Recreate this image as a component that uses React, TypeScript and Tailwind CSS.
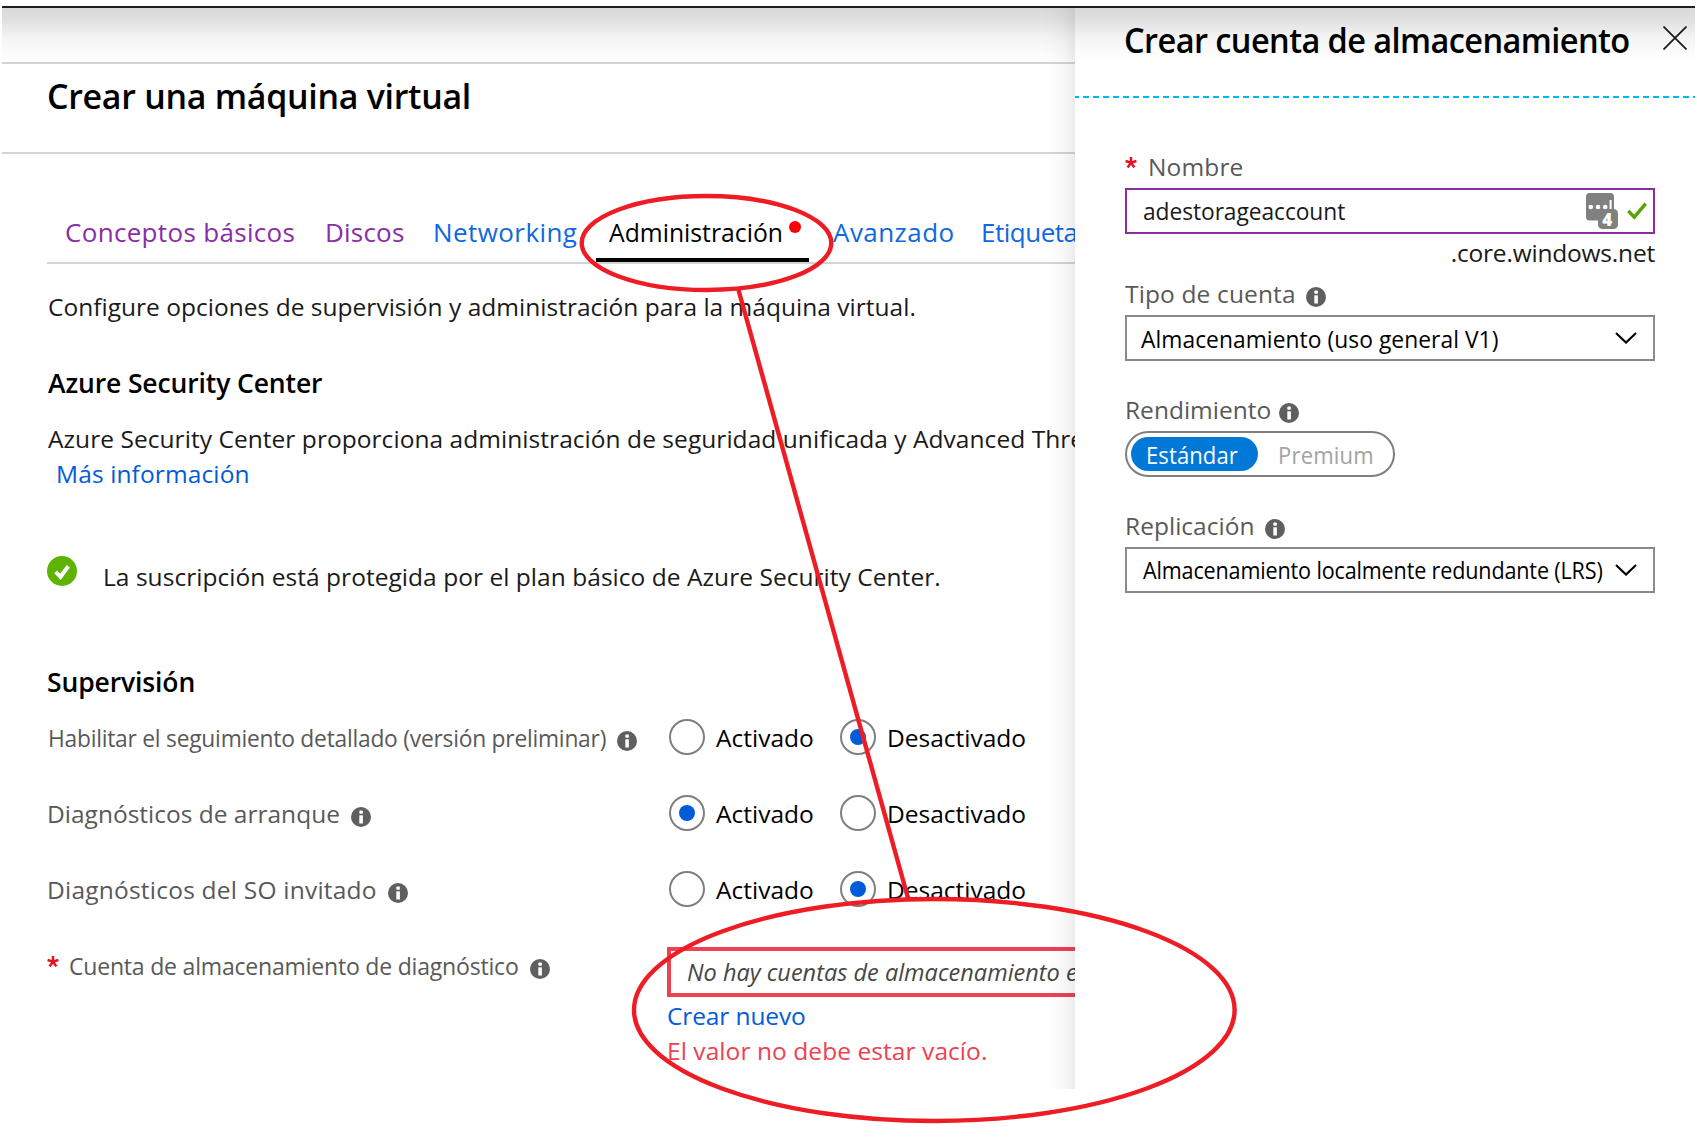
import React from "react";

function Info({ className = "" }: { className?: string }) {
  return (
    <svg viewBox="0 0 20 20" className={`size-5 shrink-0 ${className}`}>
      <circle cx="10" cy="10" r="10" fill="#5f5f5f" />
      <rect x="8.3" y="3.6" width="3.6" height="3.2" rx="0.8" fill="#fff" />
      <path d="M8.3 8.3h3.6v8.2H8.3z" fill="#fff" />
    </svg>
  );
}

function Asterisk() {
  return (
    <svg viewBox="0 0 12 11" className="h-[11px] w-3 shrink-0" stroke="#e81123" strokeWidth="2.5" fill="none">
      <path d="M6 0v6M.6 4 6 5.8 11.4 4M2.6 10.4 6 5.8l3.4 4.6" />
    </svg>
  );
}

function Radio({ on, label, width }: { on: boolean; label: string; width: string }) {
  return (
    <div className={`flex shrink-0 items-center ${width}`}>
      <span className="flex size-9 shrink-0 items-center justify-center rounded-full border-2 border-[#7f7f7f]">
        {on && <span className="size-4 rounded-full bg-[#015cda]" />}
      </span>
      <span className="pt-[2px] pl-[11px] leading-[30px] text-black">{label}</span>
    </div>
  );
}

function OptionRow({ label, first }: { label: React.ReactNode; first: boolean }) {
  return (
    <div className="flex h-[76px] items-center">
      <div className="flex w-[622px] shrink-0 items-center text-[#595959]">{label}</div>
      <Radio on={first} label="Activado" width="w-[171px]" />
      <Radio on={!first} label="Desactivado" width="w-[200px]" />
    </div>
  );
}

function Chevron() {
  return (
    <svg viewBox="0 0 22 12" className="h-3 w-[22px] shrink-0" fill="none" stroke="#000" strokeWidth="2.1">
      <path d="M1 1l10 9.6L21 1" />
    </svg>
  );
}

function MainBlade() {
  return (
    <main className="relative h-[1081px] w-[1073px] shrink-0 overflow-hidden whitespace-nowrap">
      <div className="h-14 border-b-2 border-[#d4d4d4]" />
      <header className="h-[90px] border-b-2 border-[#d4d4d4] pt-[7px] pl-[45px]">
        <h1 className="w-fit origin-left scale-x-[.97] text-[35px] leading-[50px] font-semibold tracking-[-.3px] text-black">
          Crear una máquina virtual
        </h1>
      </header>
      <nav className="ml-[45px] flex h-[110px] border-b-2 border-[#d4d4d4] pt-[62px] pl-[18px] text-[26px] leading-[32px] text-[#1068e0]">
        <span className="w-[260px] shrink-0 tracking-[.32px] text-[#8a2da5]">Conceptos básicos</span>
        <span className="w-[108px] shrink-0 tracking-[.2px] text-[#8a2da5]">Discos</span>
        <span className="w-[163px] shrink-0 tracking-[.42px]">Networking</span>
        <span className="flex w-[213px] shrink-0 border-b-4 border-black pl-[13px] text-black">
          <span className="w-[180px] origin-left scale-x-[.95] tracking-[.02px]">Administración</span>
          <span className="mt-[5px] size-3 shrink-0 rounded-full bg-[#fb0007]" />
        </span>
        <span className="ml-6 w-[148px] shrink-0 tracking-[.45px]">Avanzado</span>
        <span className="shrink-0 tracking-[-.5px]">Etiqueta</span>
      </nav>
      <section className="ml-[46px] leading-[30px] text-[#1a1a1a]">
        <p className="mt-[28px] tracking-[.02px]">
          Configure opciones de supervisión y administración para la máquina virtual.
        </p>
        <h2 className="mt-[46px] text-[26.5px] font-semibold tracking-[-.12px] text-black">Azure Security Center</h2>
        <p className="mt-[26px] tracking-[.05px]">
          Azure Security Center proporciona administración de seguridad unificada y Advanced Thre
        </p>
        <p className="mt-[5px] pl-2 tracking-[.12px] text-[#015cda]">Más información</p>
        <div className="mt-[67px] -ml-px flex items-start">
          <svg viewBox="0 0 30 30" className="size-[30px] shrink-0">
            <circle cx="15" cy="15" r="15" fill="#5db300" />
            <path d="M8.7 15.8l4.8 5 7.8-10.6" fill="none" stroke="#fff" strokeWidth="4" />
          </svg>
          <p className="mt-[6px] ml-[26px] tracking-[.04px]">
            La suscripción está protegida por el plan básico de Azure Security Center.
          </p>
        </div>
        <h2 className="mt-[75px] -ml-px text-[26.5px] font-semibold tracking-[-.12px] text-black">Supervisión</h2>
      </section>
      <section className="mt-[2px] ml-[45px]">
        <OptionRow
          first={false}
          label={
            <>
              <span className="w-[570px] origin-left scale-x-[.93] pt-[2px] pl-px tracking-[-.25px]">
                Habilitar el seguimiento detallado (versión preliminar)
              </span>
              <Info className="mt-2" />
            </>
          }
        />
        <OptionRow
          first
          label={
            <>
              <span className="w-[304px] pt-[2px]">Diagnósticos de arranque</span>
              <Info className="mt-2" />
            </>
          }
        />
        <OptionRow
          first={false}
          label={
            <>
              <span className="w-[341px] pt-[2px] tracking-[.22px]">Diagnósticos del SO invitado</span>
              <Info className="mt-2" />
            </>
          }
        />
        <div className="flex">
          <div className="flex h-[76px] w-[620px] shrink-0 items-center text-[#595959]">
            <div className="-mt-2">
              <Asterisk />
            </div>
            <span className="ml-[10px] w-[461px] origin-left scale-x-[.94] pt-[2px] tracking-[-.22px]">
              Cuenta de almacenamiento de diagnóstico
            </span>
            <Info className="mt-2" />
          </div>
          <div className="mt-5 w-[520px] shrink-0 leading-[30px]">
            <div className="h-[50px] border-4 border-[#ee4152] pt-[6px] pl-4 text-[#464646] italic">
              <span className="inline-block origin-left scale-x-[.96]">
                No hay cuentas de almacenamiento e
              </span>
            </div>
            <p className="mt-[4px] tracking-[-.12px] text-[#015cda]">Crear nuevo</p>
            <p className="mt-[5px] tracking-[.07px] text-[#ee4152]">El valor no debe estar vacío.</p>
          </div>
        </div>
      </section>
      <div className="absolute inset-y-0 right-0 w-8 bg-[linear-gradient(to_left,rgba(0,0,0,.08),rgba(0,0,0,.045)_25%,rgba(0,0,0,.015)_55%,transparent)]" />
    </main>
  );
}

function StorageBlade() {
  return (
    <aside className="h-[1081px] w-[620px] shrink-0 overflow-hidden whitespace-nowrap">
      <header className="flex h-[88px] pl-[49px]">
        <h2 className="w-[539px] origin-left scale-x-[.93] pt-[7px] text-[35px] leading-[50px] font-semibold tracking-[-.64px] text-black">
          Crear cuenta de almacenamiento
        </h2>
        <svg viewBox="0 0 24 24" className="mt-[18px] size-6 shrink-0" stroke="#1a1a1a" strokeWidth="1.7">
          <path d="M.5.5l23 23M23.5.5l-23 23" />
        </svg>
      </header>
      <div className="h-[2px] bg-[repeating-linear-gradient(to_right,#00b7f0_0_4px,transparent_4px_8px,#00b7f0_8px_10px)]" />
      <div className="mt-[54px] ml-[50px] w-[530px] leading-[30px] text-[#595959]">
        <div className="flex">
          <div className="pt-[5px]">
            <Asterisk />
          </div>
          <span className="ml-[11px] tracking-[.15px]">Nombre</span>
        </div>
        <div className="mt-[6px] flex h-[46px] items-center border-2 border-[#8a2da5] pl-4 text-[#1a1a1a]">
          <span className="w-[443px] origin-left scale-x-[.93] tracking-[-.08px]">adestorageaccount</span>
          <svg viewBox="0 0 32 36" className="h-9 w-8 shrink-0">
            <rect width="28" height="27.5" rx="3.5" fill="#808080" />
            <circle cx="4.8" cy="14" r="2.3" fill="#fff" />
            <circle cx="12" cy="14" r="2.3" fill="#fff" />
            <circle cx="19.2" cy="14" r="2.3" fill="#fff" />
            <rect x="23.6" y="7" width="2" height="9.5" fill="#fff" />
            <rect x="12" y="16" width="20" height="20" rx="4.5" fill="#808080" />
            <text x="21.3" y="32.5" textAnchor="middle" fontFamily="Open Sans" fontWeight="800" fontSize="17" fill="#fff">
              4
            </text>
          </svg>
          <svg viewBox="0 0 20 18" className="ml-[9px] h-[18px] w-5 shrink-0" fill="none" stroke="#57a300" strokeWidth="3.4">
            <path d="M1.3 8.8l6 6.4L18.7 1.6" />
          </svg>
        </div>
        <p className="mt-[4px] text-right tracking-[-.2px] text-[#1a1a1a]">.core.windows.net</p>
        <div className="mt-[10.5px] flex items-center">
          <span className="w-[181px] tracking-[.14px]">Tipo de cuenta</span>
          <Info className="mt-[6px]" />
        </div>
        <div className="mt-[6.5px] flex h-[46px] items-center border-2 border-[#8a8a8a] pl-[14px] text-black">
          <span className="w-[474px] origin-left scale-x-[.93] pt-px tracking-[.06px]">Almacenamiento (uso general V1)</span>
          <Chevron />
        </div>
        <div className="mt-[34px] flex items-center">
          <span className="w-[154px]">Rendimiento</span>
          <Info className="mt-[6px]" />
        </div>
        <div className="mt-[6px] flex h-[46px] w-[270px] items-center rounded-full border-2 border-[#7f7f7f] px-1">
          <span className="flex h-[34px] w-[127px] shrink-0 items-center rounded-full bg-[#0078d7] pt-[2px] pl-[15px] text-white">
            <span className="origin-left scale-x-[.9] tracking-[.1px]">Estándar</span>
          </span>
          <span className="ml-[20px] origin-left scale-x-[.9] pt-[2px] tracking-[.2px] text-[#a3a3a3]">Premium</span>
        </div>
        <div className="mt-[34px] flex items-center">
          <span className="w-[140px] tracking-[.02px]">Replicación</span>
          <Info className="mt-[6px]" />
        </div>
        <div className="mt-[6px] flex h-[46px] items-center border-2 border-[#8a8a8a] pl-4 text-black">
          <span className="w-[472px] shrink-0 origin-left scale-x-[.88] tracking-[-.17px]">
            Almacenamiento localmente redundante (LRS)
          </span>
          <Chevron />
        </div>
      </div>
    </aside>
  );
}

export default function App() {
  return (
    <div className="relative h-[1145px] w-[1697px] overflow-hidden bg-white pt-[6px] pl-[2px] font-['Open_Sans','Noto_Sans',sans-serif] text-[24.5px]">
      <div className="h-[2px] w-[1693px] bg-[#1f1f1f]" />
      <div className="relative flex">
        <MainBlade />
        <StorageBlade />
        <div className="absolute top-0 left-0 h-[54px] w-[1693px] bg-[linear-gradient(to_bottom,rgba(0,0,0,.15),rgba(0,0,0,.125)_20%,rgba(0,0,0,.045)_55%,rgba(0,0,0,.01)_85%,transparent)]" />
      </div>
      <svg viewBox="0 0 1697 1145" className="pointer-events-none absolute inset-0 h-[1145px] w-[1697px]" fill="none" stroke="#ee1c24" strokeWidth="4.4">
        <ellipse cx="706.5" cy="243" rx="124.8" ry="47" />
        <path d="M738.5 290L908 898" />
        <ellipse cx="934.3" cy="1010" rx="300.3" ry="111" />
      </svg>
    </div>
  );
}
